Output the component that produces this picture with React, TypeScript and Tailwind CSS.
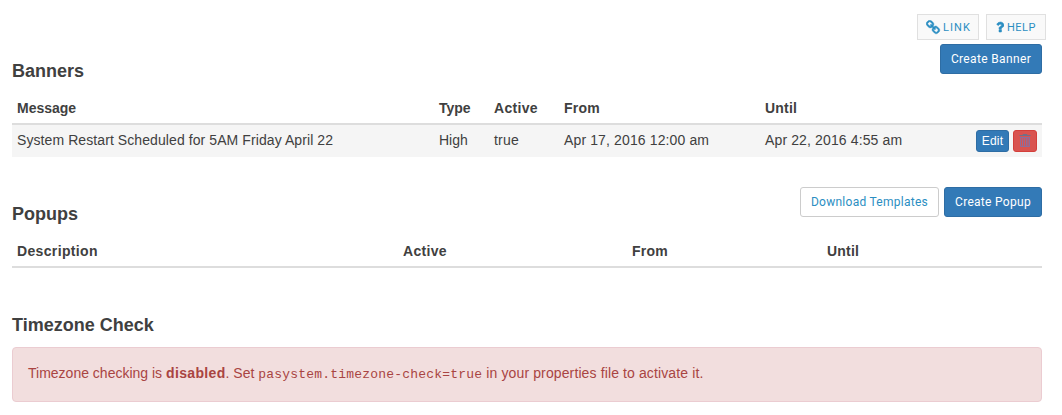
import type { ReactNode } from "react";

function LinkIcon() {
  return (
    <svg viewBox="0 0 1792 1792" className="h-[15px] w-[15px] shrink-0 fill-current stroke-current" strokeWidth="50">
      <path d="M1456 1216q0-40-28-68l-208-208q-28-28-68-28-42 0-72 32 3 3 19 18.5t21.5 21.5 15 19 13 25.5 3.5 27.5q0 40-28 68t-68 28q-15 0-27.5-3.5t-25.5-13-19-15-21.5-21.5-18.5-19q-33 31-33 73 0 40 28 68l206 207q27 27 68 27 40 0 68-26l147-146q28-28 28-67zm-703-705q0-40-28-68l-206-207q-28-28-68-28-39 0-68 27l-147 146q-28 28-28 67 0 40 28 68l208 208q27 27 68 27 42 0 72-31-3-3-19-18.5t-21.5-21.5-15-19-13-25.5-3.5-27.5q0-40 28-68t68-28q15 0 27.5 3.5t25.5 13 19 15 21.5 21.5 18.5 19q33-31 33-73zm895 705q0 120-85 203l-147 146q-83 83-203 83-121 0-204-85l-206-207q-83-83-83-203 0-123 88-209l-88-88q-86 88-208 88-120 0-204-84l-208-208q-84-84-84-204t85-203l147-146q83-83 203-83 121 0 204 85l206 207q83 83 83 203 0 123-88 209l88 88q86-88 208-88 120 0 204 84l208 208q84 84 84 204z" />
    </svg>
  );
}

function QuestionIcon() {
  return (
    <svg viewBox="384 0 1024 1792" className="h-[14px] w-[8px] shrink-0 fill-current stroke-current" strokeWidth="70">
      <path d="M1088 1256v240q0 16-12 28t-28 12h-240q-16 0-28-12t-12-28v-240q0-16 12-28t28-12h240q16 0 28 12t12 28zm316-600q0 54-15.5 101t-35 76.5-55 59.5-57.5 43.5-61 35.5q-41 23-68.5 65t-27.5 67q0 17-12 32.5t-28 15.5h-240q-15 0-25.5-18.5t-10.5-37.5v-45q0-83 65-156.5t143-108.5q59-27 84-56t25-76q0-42-46.5-74t-107.5-32q-65 0-108 29-35 25-107 115-13 16-31 16-12 0-25-8l-164-125q-13-10-15.5-25t5.5-28q160-266 464-266 80 0 161 31t146 83 106 127.5 41 158.5z" />
    </svg>
  );
}

function TrashIcon() {
  return (
    <svg viewBox="0 0 12 14" className="-mt-[2px] h-[14px] w-[12px] fill-none" strokeWidth="1">
      <path className="stroke-[#6f7088]" d="M4 2V1.5h4V2M.5 2.5h11" />
      <path className="stroke-[#8d6d9b]" d="M1.5 4v9.5h9V4M1.5 4.5h9M3.5 5v8M5.5 5v8M7.5 5v8M9 5v8" />
    </svg>
  );
}

function Button({ children, className }: { children: ReactNode; className: string }) {
  return (
    <button className={`flex h-[30px] items-center justify-center rounded-[3px] border font-[Roboto,sans-serif] text-[12px] whitespace-nowrap ${className}`}>
      {children}
    </button>
  );
}

const heading = "text-[18px] leading-[20px] font-bold";
const th = "h-[32px] border-b-2 border-[#ddd] p-0 pl-[5px]";
const td = "p-0 pb-[2px] pl-[5px]";

export default function App() {
  return (
    <main className="h-[415px] w-[1062px] overflow-hidden bg-white pt-[14px] pr-5 pl-3 font-['Liberation_Sans',Arial,sans-serif] text-[14px] leading-5 text-[#404040]">
      <nav className="-mr-1 flex h-[26px] justify-end gap-[7px] font-[Roboto,sans-serif] text-[11px] text-[#2b8ec2]">
        <a className="flex w-[62px] items-center border border-[#e0e0e0] bg-[#f9f9f9] pl-2">
          <LinkIcon />
          <span className="ml-[2px] pt-[2px] tracking-[1.1px]">LINK</span>
        </a>
        <a className="flex w-[60px] items-center border border-[#e0e0e0] bg-[#f9f9f9] pl-[9px]">
          <QuestionIcon />
          <span className="ml-[3px] pt-[2px] tracking-[0.5px]">HELP</span>
        </a>
      </nav>

      <section className="h-[143px] pt-1">
        <div className="flex h-[49px] justify-between">
          <h3 className={`pt-[17px] ${heading}`}>Banners</h3>
          <Button className="w-[102px] border-[#2e6da4] bg-[#337ab7] text-white tracking-[0.35px]">Create Banner</Button>
        </div>
        <table className="w-full table-fixed border-separate border-spacing-0 text-left">
          <colgroup>
            <col className="w-[422px]" />
            <col className="w-[55px]" />
            <col className="w-[70px]" />
            <col className="w-[201px]" />
            <col className="w-[206px]" />
            <col className="w-[76px]" />
          </colgroup>
          <thead>
            <tr>
              <th className={th}>Message</th>
              <th className={th}>Type</th>
              <th className={`tracking-[0.3px] ${th}`}>Active</th>
              <th className={`tracking-[0.2px] ${th}`}>From</th>
              <th className={`tracking-[0.2px] ${th}`}>Until</th>
              <th className={th} />
            </tr>
          </thead>
          <tbody>
            <tr className="h-[32px] bg-[#f5f5f5]">
              <td className={`tracking-[0.085px] ${td}`}>System Restart Scheduled for 5AM Friday April 22</td>
              <td className={td}>High</td>
              <td className={`tracking-[0.2px] ${td}`}>true</td>
              <td className={`tracking-[0.13px] ${td}`}>Apr 17, 2016 12:00 am</td>
              <td className={`tracking-[0.13px] ${td}`}>Apr 22, 2016 4:55 am</td>
              <td className="p-0">
                <div className="flex gap-1 pl-[10px]">
                  <button className="flex h-[22px] w-[33px] items-center justify-center rounded-[3px] border border-[#2e6da4] bg-[#337ab7] text-[12px] tracking-[0.2px] text-white">Edit</button>
                  <button aria-label="Delete" className="flex h-[22px] w-6 items-center justify-center rounded-[3px] border border-[#d43f3a] bg-[#d9534f]">
                    <TrashIcon />
                  </button>
                </div>
              </td>
            </tr>
          </tbody>
        </table>
      </section>

      <section className="h-[132px] pt-1">
        <div className="flex h-[49px] justify-between">
          <h3 className={`pt-[17px] ${heading}`}>Popups</h3>
          <div className="flex gap-[5px]">
            <Button className="w-[139px] border-[#ccc] bg-white text-[#2b8ec2] tracking-[0.27px]">Download Templates</Button>
            <Button className="w-[98px] border-[#2e6da4] bg-[#337ab7] text-white tracking-[0.3px]">Create Popup</Button>
          </div>
        </div>
        <table className="w-full table-fixed border-separate border-spacing-0 text-left">
          <colgroup>
            <col className="w-[386px]" />
            <col className="w-[229px]" />
            <col className="w-[195px]" />
            <col className="w-[220px]" />
          </colgroup>
          <thead>
            <tr>
              <th className={`tracking-[0.35px] ${th}`}>Description</th>
              <th className={`tracking-[0.3px] ${th}`}>Active</th>
              <th className={`tracking-[0.2px] ${th}`}>From</th>
              <th className={`tracking-[0.2px] ${th}`}>Until</th>
            </tr>
          </thead>
        </table>
      </section>

      <section>
        <h3 className={`mb-3 ${heading}`}>Timezone Check</h3>
        <p className="h-[55px] rounded-[4px] border border-[#ebccd1] bg-[#f2dede] px-[15px] pt-[15px] text-[#a94442]">
          Timezone checking is <strong className="tracking-[0.35px]">disabled</strong>. Set{" "}
          <code className="font-['Liberation_Mono',monospace] text-[13px] tracking-[0.2px]">pasystem.timezone-check=true</code>
          <span className="tracking-[0.12px]"> in your properties file to activate it.</span>
        </p>
      </section>
    </main>
  );
}
